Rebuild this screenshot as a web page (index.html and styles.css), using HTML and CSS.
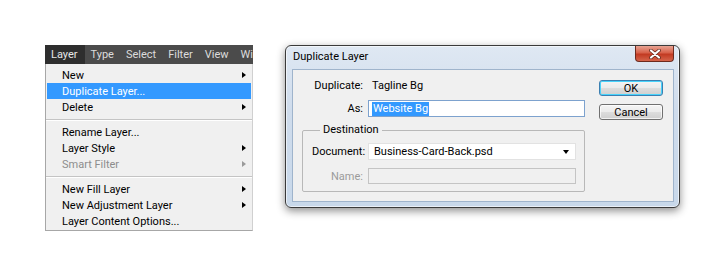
FILE: index.html
```html
<!DOCTYPE html>
<html>
<head>
<meta charset="utf-8">
<title>Duplicate Layer</title>
<link rel="stylesheet" href="styles.css">
</head>
<body>
<div class="stage">
  <div class="menu">
    <div class="menubar">
      <span class="mb-item active">Layer</span>
      <span class="mb-item">Type</span>
      <span class="mb-item">Select</span>
      <span class="mb-item">Filter</span>
      <span class="mb-item">View</span>
      <span class="mb-item">Wi</span>
    </div>
    <ul class="menu-list">
      <li class="mi sub">New</li>
      <li class="mi hl">Duplicate Layer...</li>
      <li class="mi sub">Delete</li>
      <li class="sep"></li>
      <li class="mi">Rename Layer...</li>
      <li class="mi sub">Layer Style</li>
      <li class="mi sub disabled">Smart Filter</li>
      <li class="sep"></li>
      <li class="mi sub">New Fill Layer</li>
      <li class="mi sub">New Adjustment Layer</li>
      <li class="mi">Layer Content Options...</li>
    </ul>
  </div>

  <div class="dialog">
    <div class="titlebar">
      <span class="title">Duplicate Layer</span>
      <span class="close">
        <svg width="14" height="10" viewBox="0 0 14 10">
          <path d="M3 1.5 L11 8.5 M11 1.5 L3 8.5" stroke="#5a2318" stroke-width="3.6" stroke-linecap="round" fill="none"/>
          <path d="M3 1.5 L11 8.5 M11 1.5 L3 8.5" stroke="#ffffff" stroke-width="2.2" stroke-linecap="round" fill="none"/>
        </svg>
      </span>
    </div>
    <div class="panel">
      <div class="form">
        <div class="row r1"><span class="lbl">Duplicate:</span><span class="val">Tagline Bg</span></div>
        <div class="row r2"><span class="lbl">As:</span><div class="input focus"><span class="selected">Website Bg</span></div></div>
        <fieldset class="group">
          <legend>Destination</legend>
          <div class="row g1"><span class="lbl">Document:</span><div class="select"><span>Business-Card-Back.psd</span><span class="caret"></span></div></div>
          <div class="row g2"><span class="lbl dim">Name:</span><div class="input disabled"></div></div>
        </fieldset>
      </div>
      <div class="buttons">
        <div class="btn default">OK</div>
        <div class="btn">Cancel</div>
      </div>
    </div>
  </div>
</div>
</body>
</html>
```

FILE: styles.css
```css
* { box-sizing: border-box; }

body {
  margin: 0;
  background: #ffffff;
  font-family: Roboto, "Liberation Sans", Arial, sans-serif;
  font-size: 11px;
  color: #000;
}

.stage {
  display: flex;
  align-items: flex-start;
  gap: 32px;
  padding: 45px 0 0 45px;
}

/* ---------- menu ---------- */
.menu {
  width: 208px;
}

.menubar {
  display: flex;
  height: 19px;
  background: #4b4b4b;
  overflow: hidden;
  white-space: nowrap;
}

.mb-item {
  display: flex;
  align-items: center;
  padding: 0 6px;
  color: #dcdcdc;
  line-height: 19px;
}

.mb-item:first-child { padding-right: 7px; }

.mb-item.active {
  background: #2e2e2e;
  color: #e6e6e6;
}

.menu-list {
  list-style: none;
  margin: 0;
  padding: 3px 0 1px;
  background: #f0f0f0;
  border-left: 1px solid #a7a7a7;
  border-right: 1px solid #d0d0d0;
  border-bottom: 1px solid #a7a7a7;
}

.mi {
  display: flex;
  align-items: center;
  height: 16px;
  margin: 0 1px;
  padding: 0 5px 0 15px;
  white-space: nowrap;
}

.mi.sub::after {
  content: "";
  margin-left: auto;
  width: 0;
  height: 0;
  border-top: 3.5px solid transparent;
  border-bottom: 3.5px solid transparent;
  border-left: 4px solid #000;
}

.mi.hl {
  background: #3399ff;
  color: #ffffff;
}

.mi.disabled {
  color: #8d8d8d;
}

.mi.disabled::after {
  border-left-color: #9a9a9a;
}

.sep {
  height: 2px;
  margin: 4px 0 3px;
  border-top: 1px solid #c4c4c4;
  border-bottom: 1px solid #ffffff;
}

/* ---------- dialog ---------- */
.dialog {
  width: 395px;
  height: 163px;
  border: 1px solid #3a3a3a;
  border-radius: 6px;
  background: linear-gradient(180deg, #dfe8f3 0%, #cfdcec 40%, #c8d8ea 100%);
  box-shadow: 0 3px 8px rgba(0, 0, 0, 0.45), inset 0 0 0 1px rgba(255, 255, 255, 0.6);
  padding: 0 5px 5px 6px;
  display: flex;
  flex-direction: column;
}

.titlebar {
  display: flex;
  align-items: flex-start;
  height: 23px;
}

.title {
  padding: 4px 0 0 1px;
  line-height: 14px;
  color: #000;
}

.close {
  margin-left: auto;
  width: 39px;
  height: 16px;
  border: 1px solid #6d2a1e;
  border-top: none;
  border-radius: 0 0 4px 4px;
  background: linear-gradient(180deg, #e8a392 0%, #d7614a 45%, #c23a22 55%, #d4644b 100%);
  display: flex;
  align-items: center;
  justify-content: center;
}

.panel {
  flex: 1;
  display: flex;
  align-items: flex-start;
  gap: 14px;
  background: #f0f0f0;
  border: 1px solid #9fb4cc;
  padding: 7px 10px 0 9px;
}

.form {
  width: 284px;
  display: flex;
  flex-direction: column;
}

.row {
  display: grid;
  grid-template-columns: 61px 1fr;
  column-gap: 5px;
  align-items: center;
}

.lbl {
  text-align: right;
  white-space: nowrap;
}

.lbl.dim { color: #9b9b9b; }

.val { padding-left: 4px; }

.r1 { height: 16px; }

.r2 { margin-top: 7px; }

.input {
  height: 17px;
  background: #fff;
  border: 1px solid #abadb3;
  display: flex;
  align-items: center;
  padding-left: 3px;
}

.input.focus {
  border-color: #7da2ce;
}

.selected {
  background: #3399ff;
  color: #fff;
  line-height: 14px;
  padding: 0 1px;
}

.input.disabled {
  height: 16px;
  background: #f0f0f0;
  border-color: #c4c4c4;
}

.group {
  margin: 6px 0 0;
  padding: 6px 8px 7px 9px;
  border: 1px solid #b8b8b8;
  border-radius: 2px;
  min-width: 0;
}

.group legend {
  margin-left: 8px;
  padding: 0 3px;
  line-height: 14px;
}

.group .row {
  grid-template-columns: 51px 1fr;
}

.g2 { margin-top: 8px; }

.select {
  height: 17px;
  background: #fff;
  border: 1px solid #e2e2e2;
  display: flex;
  align-items: center;
  padding: 0 6px 0 5px;
}

.caret {
  margin-left: auto;
  width: 0;
  height: 0;
  border-left: 3.5px solid transparent;
  border-right: 3.5px solid transparent;
  border-top: 4px solid #000;
}

.buttons {
  display: flex;
  flex-direction: column;
  gap: 8px;
  padding-top: 3px;
}

.btn {
  width: 64px;
  height: 16px;
  border: 1px solid #707070;
  border-radius: 3px;
  background: linear-gradient(180deg, #f4f4f4 0%, #ebebeb 50%, #dddddd 51%, #cfcfcf 100%);
  display: flex;
  align-items: center;
  justify-content: center;
  box-shadow: inset 0 0 0 1px rgba(255, 255, 255, 0.7);
}

.btn.default {
  border-color: #3c7fb1;
  box-shadow: inset 0 0 0 1px #48d3fb;
}
```
